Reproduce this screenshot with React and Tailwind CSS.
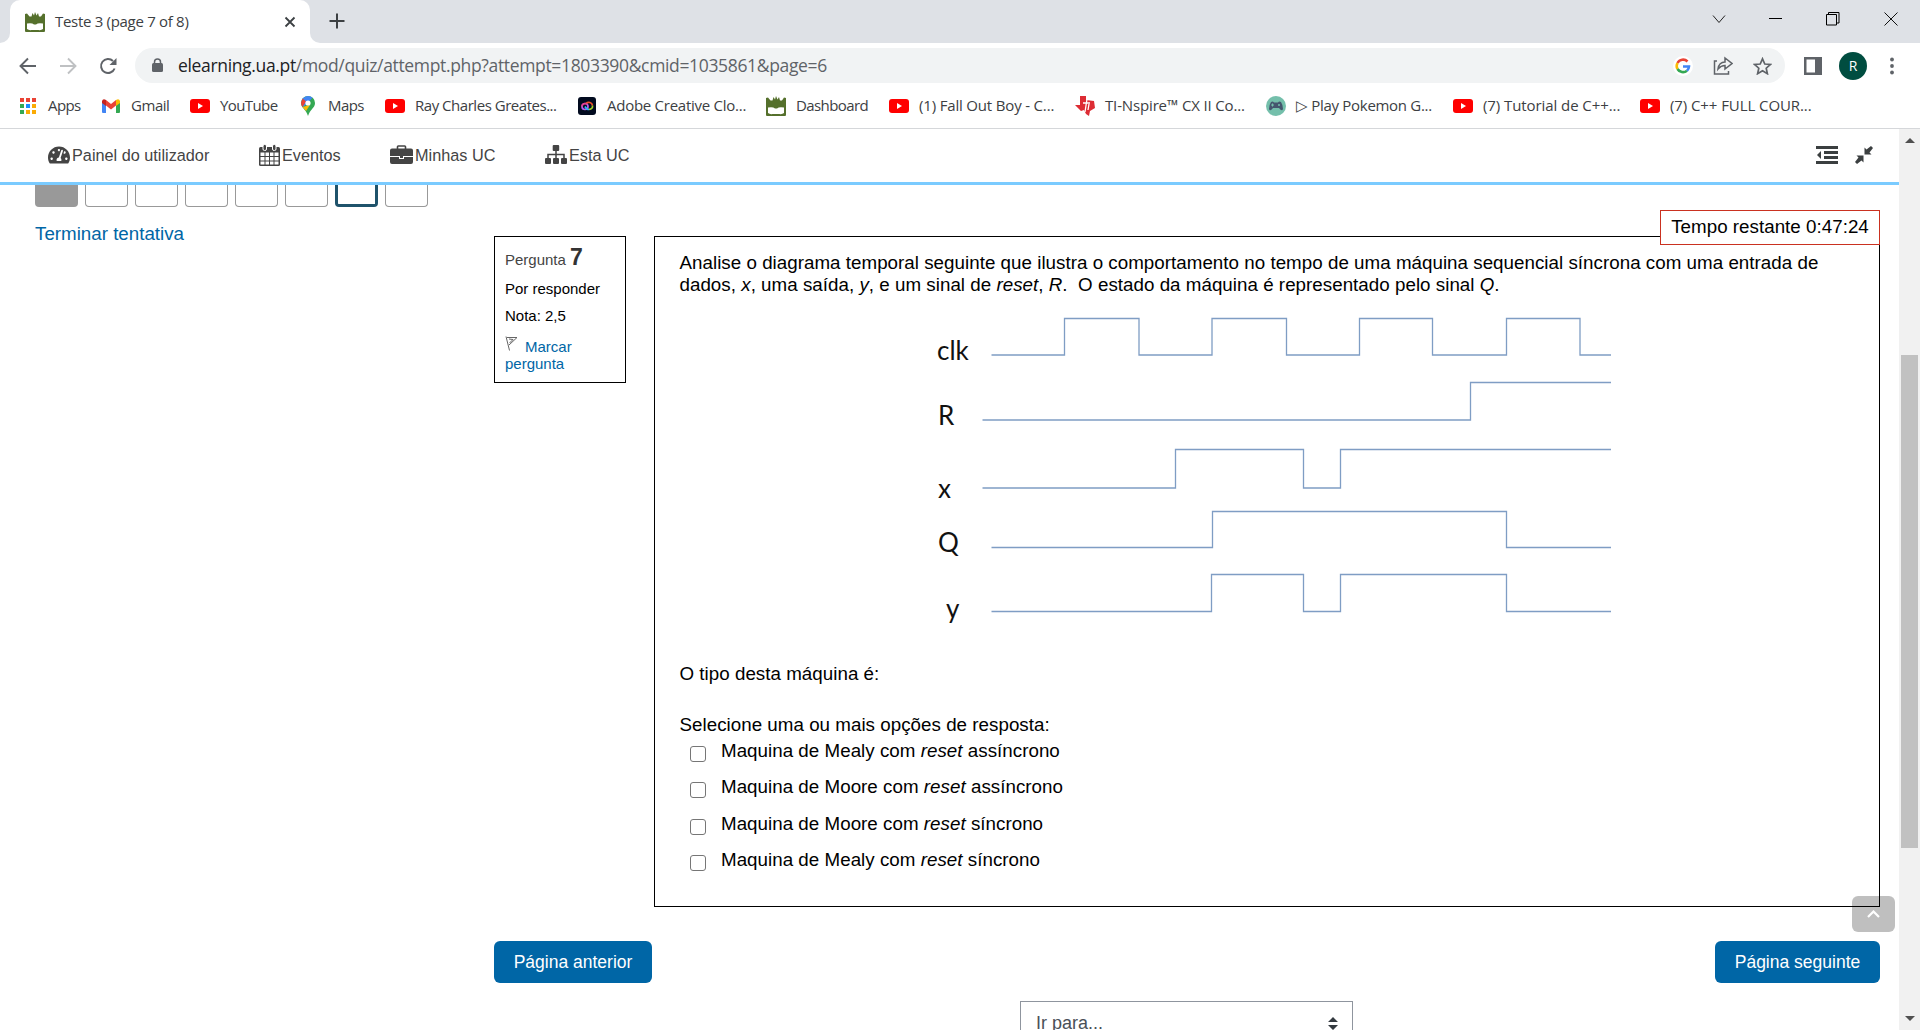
import { FaTachometerAlt } from "react-icons/fa";

const TX = "whitespace-nowrap leading-none";

function YouTube() {
  return (
    <svg width="20" height="14" viewBox="0 0 20 14"><rect width="20" height="14" rx="3" fill="#f00" /><path d="M8 4l5 3-5 3z" fill="#fff" /></svg>
  );
}
function UA() {
  return (
    <svg width="20" height="20" viewBox="0 0 20 20"><path d="M0 2l2-.5 2.500 3 2 0L7.500 1l1.500 2.500L10 0l1.500 3.500L13 1l1 3.500h2L18 1.500l2 .5v17q0 1-1 1H1q-1 0-1-1z" fill="#55702c" /><path d="M2 11.500q5-1 7 1h2q2-2 7-1V17q-2 1.500-4.500 1H6.500Q4 18.500 2 17z" fill="#fff" /></svg>
  );
}
function Apps() {
  const c = ["#ea4335", "#ea4335", "#ea4335", "#34a853", "#1a8cff", "#fbab04", "#34a853", "#fbab04", "#fbab04"];
  return (
    <svg width="18" height="18" viewBox="0 0 18 18">{c.map((f, i) => <rect key={i} x={1 + (i % 3) * 6} y={1 + Math.floor(i / 3) * 6} width="4" height="4" fill={f} />)}</svg>
  );
}
function Gmail() {
  return (
    <svg width="18" height="14" viewBox="0 0 18 14"><path d="M0 2v11q0 1 1 1h3V5z" fill="#4285f4" /><path d="M18 2v11q0 1-1 1h-3V5z" fill="#34a853" /><path d="M4 1l5 4 5-4v5.500L9 10.500 4 6.500z" fill="#ea4335" /><path d="M14 1q3-2 4 1v2l-4 3z" fill="#fbbc04" /><path d="M0 2q1-3 4-1v6L0 4z" fill="#c5221f" /></svg>
  );
}
function Maps() {
  return (
    <svg width="14" height="20" viewBox="0 0 14 20"><path d="M7 0a7 7 0 0 0-7 7c0 5 5 6 7 13 2-7 7-8 7-13a7 7 0 0 0-7-7z" fill="#34a853" /><path d="M2 2.200A7 7 0 0 1 11.500 1.600L7 7 2 11Q-1 6 2 2.200z" fill="#4285f4" /><path d="M0 6.500L1.700 2.500 5 5.500 1.500 11Q0 9 0 6.500z" fill="#ea4335" /><path d="M1.500 11L9 9 5 15Q3 12.500 1.500 11z" fill="#fbbc04" /><circle cx="7" cy="7" r="2.600" fill="#fff" /></svg>
  );
}
function Adobe() {
  return (
    <svg width="18" height="18" viewBox="0 0 18 18"><rect width="18" height="18" rx="3" fill="#020b1f" /><g fill="none" strokeWidth="1.700"><circle cx="7" cy="9.500" r="3" stroke="#b45cf0" /><path d="M8 6.500a3.800 3.800 0 0 1 6.500 2" stroke="#f0502a" /><path d="M14.500 8.500q.5 3.500-3.500 4" stroke="#a5d02a" /><path d="M11 12.500q-2.500 0-4-3" stroke="#26b6f5" /><path d="M4 9.500a3 3 0 0 1 5-2.200" stroke="#e83f8a" /></g></svg>
  );
}
function TI() {
  return (
    <svg width="20" height="20" viewBox="0 0 20 20"><path d="M5 0h6v4l8 1 1 7-5 3-1 5-3-2-2-4-3 1-6-6h5z" fill="#dd2c34" /><path d="M12 3l-2 13M8 7h7M14 8l-1 6" stroke="#fff" strokeWidth="1.300" fill="none" /></svg>
  );
}
function Pad() {
  return (
    <svg width="20" height="20" viewBox="0 0 20 20"><circle cx="10" cy="10" r="10" fill="#74bfab" /><path d="M5 6q2-1 3 .5h4Q13 5 15 6q2 3 2 7-1 3-4-1H7q-3 4-4 1 0-4 2-7z" fill="#45566e" /><path d="M5 9h3M6.500 7.500v3" stroke="#74bfab" /><circle cx="13" cy="9" r="1" fill="#74bfab" /></svg>
  );
}
const marks = [
  ["Apps", Apps, "w-[83px]", "tracking-[-0.6px]"],
  ["Gmail", Gmail, "w-[89px]", "tracking-[-0.45px]"],
  ["YouTube", YouTube, "w-[108px]", "tracking-[-0.6px]"],
  ["Maps", Maps, "w-[87px]", "tracking-[-0.6px]"],
  ["Ray Charles Greates...", YouTube, "w-[192px]", "tracking-[-0.47px]"],
  ["Adobe Creative Clo...", Adobe, "w-[189px]", "tracking-[-0.26px]"],
  ["Dashboard", UA, "w-[123px]", "tracking-[-0.6px]"],
  ["(1) Fall Out Boy - C...", YouTube, "w-[186px]", "tracking-[-0.17px]"],
  ["TI-Nspire™ CX II Co...", TI, "w-[191px]", "tracking-[-0.15px]"],
  ["▷ Play Pokemon G...", Pad, "w-[187px]", "tracking-[-0.3px]"],
  ["(7) Tutorial de C++...", YouTube, "w-[187px]", "tracking-[-0.08px]"],
  ["(7) C++ FULL COUR...", YouTube, "w-[187px]", "tracking-[-0.08px]"],
];

function Browser() {
  return (
    <header className="font-['Open_Sans',sans-serif] text-[15px] text-[#3c4043]">
      <div className="flex h-[43px] bg-[#dee1e6]">
        <div className="w-[10px] self-end bg-white"><div className="h-[10px] rounded-br-[10px] bg-[#dee1e6]" /></div>
        <div className="flex w-[300px] items-center rounded-t-[10px] bg-white pl-[15px] pr-[14px]">
          <UA />
          <span className={`${TX} ml-[10px] flex-1 text-[15px] tracking-[-0.3px]`}>Teste 3 (page 7 of 8)</span>
          <svg width="12" height="12" viewBox="0 0 12 12" stroke="#3c4043" strokeWidth="1.800"><path d="M1.500 1.500l9 9M10.500 1.500l-9 9" /></svg>
        </div>
        <div className="w-[10px] self-end bg-white"><div className="h-[10px] rounded-bl-[10px] bg-[#dee1e6]" /></div>
        <svg className="ml-[9px] mt-[13px]" width="16" height="16" viewBox="0 0 16 16" stroke="#3c4043" strokeWidth="2"><path d="M8 .5v15M.5 8h15" /></svg>
        <div className="ml-auto mr-[22px] flex h-[37px] items-center">
          <svg width="14" height="10" viewBox="0 0 14 10" fill="none" stroke="#222"><path d="M1 1.500l6 7 6-7" /></svg>
          <div className="ml-[43px] h-px w-[13px] bg-black" />
          <svg className="ml-[44px]" width="14" height="14" viewBox="0 0 14 14" fill="none" stroke="#000"><path d="M.5 2.500h10v10.500H.5zM2.500 2.500V.5h10.500v10.500h-2.500" /></svg>
          <svg className="ml-[44px]" width="14" height="14" viewBox="0 0 14 14" fill="none" stroke="#111"><path d="M.5 .5l13 13M13.500 .5l-13 13" /></svg>
        </div>
      </div>
      <div className="flex h-[45px] items-center pl-[19px] pr-[26px]">
        <svg width="18" height="18" viewBox="0 0 18 18" fill="none" stroke="#5f6368" strokeWidth="1.900"><path d="M17 9H2M9 1.500L1.500 9 9 16.500" /></svg>
        <svg className="ml-[22px]" width="18" height="18" viewBox="0 0 18 18" fill="none" stroke="#bfc1c3" strokeWidth="1.900"><path d="M1 9h15M9 1.500L16.500 9 9 16.500" /></svg>
        <svg className="ml-[22px]" width="18" height="18" viewBox="0 0 18 18"><path d="M15.600 11.500A7 7 0 1 1 14 4" fill="none" stroke="#5f6368" strokeWidth="2" /><path d="M17.500 1v7h-7z" fill="#5f6368" /></svg>
        <div className="ml-[18px] flex h-[35px] flex-1 items-center rounded-full bg-[#f1f3f4] pl-[17px] pr-[13px]">
          <svg width="11" height="15" viewBox="0 0 11 15"><rect y="5" width="11" height="9" rx="1.500" fill="#5f6368" /><path d="M2.500 6V4a3 3 0 0 1 6 0v2" fill="none" stroke="#5f6368" strokeWidth="1.500" /></svg>
          <span className={`${TX} ml-[15px] flex-1 text-[17.5px] tracking-[-0.34px] text-[#5f6368]`}><span className="text-[#202124]">elearning.ua.pt</span>/mod/quiz/attempt.php?attempt=1803390&amp;cmid=1035861&amp;page=6</span>
          <svg width="20" height="20" viewBox="0 0 20 20"><circle cx="10" cy="10" r="10" fill="#fff" /><g fill="none" strokeWidth="2.600"><path d="M4.500 7A6.300 6.300 0 0 1 14.500 5.500" stroke="#ea4335" /><path d="M4.500 13a6.300 6.300 0 0 1 0-6" stroke="#fbbc05" /><path d="M4.500 13a6.300 6.300 0 0 0 9.500 1.700" stroke="#34a853" /><path d="M14 14.700a6 6 0 0 0 2-4.200h-6" stroke="#4285f4" /></g></svg>
          <svg className="ml-[20px]" width="20" height="20" viewBox="0 0 20 20" fill="none" stroke="#5f6368" strokeWidth="1.500"><path d="M4 5H1.500v13h14v-3M5 13q1-7 7-7V2l7 5.500L12 13V9.500q-4 0-7 3.500z" /></svg>
          <svg className="ml-[20px]" width="19" height="18" viewBox="0 0 19 18" fill="none" stroke="#5f6368" strokeWidth="1.700"><path d="M9.500 1.800l2.300 5.200 5.600.5-4.200 3.700 1.200 5.500-4.900-2.900-4.900 2.900 1.200-5.500L1.600 7.500l5.600-.5z" /></svg>
        </div>
        <svg className="ml-[19px]" width="18" height="18" viewBox="0 0 18 18"><path d="M0 0h18v18H0zM2.500 2.500v13H11v-13z" fill="#5f6368" fillRule="evenodd" /></svg>
        <div className="ml-[17px] flex size-[28px] items-center justify-center rounded-full bg-[#004d40] text-[14px] text-white">R</div>
        <svg className="ml-[23px]" width="4" height="18" viewBox="0 0 4 18" fill="#5f6368"><circle cx="2" cy="2.500" r="1.900" /><circle cx="2" cy="9" r="1.900" /><circle cx="2" cy="15.500" r="1.900" /></svg>
      </div>
      <div className="flex h-[41px] items-center border-b border-[#d5d7da] pb-[5px] pl-[18px]">
        {marks.map(([t, I, w, tr]) => (
          <div key={t} className={`flex shrink-0 items-center gap-[10px] ${w}`}>
            <div className="flex w-[20px] justify-center"><I /></div>
            <span className={`${TX} ${tr}`}>{t}</span>
          </div>
        ))}
      </div>
    </header>
  );
}

const Calendar = () => (
  <svg width="21" height="22" viewBox="0 0 21 22"><rect y="3" width="21" height="19" rx="1.500" fill="#444" /><path d="M1.500 8.500h4v3.500h-4zM6.500 8.500h3.500v3.500H6.500zM11 8.500h3.500v3.500H11zM15.500 8.500h4v3.500h-4zM1.500 13h4v3.500h-4zM6.500 13h3.500v3.500H6.500zM11 13h3.500v3.500H11zM15.500 13h4v3.500h-4zM1.500 17.500h4v3h-4zM6.500 17.500h3.500v3H6.500zM11 17.500h3.500v3H11zM15.500 17.500h4v3h-4z" fill="#fff" /><rect x="4" y=".5" width="3.500" height="6" rx="1.500" fill="#444" stroke="#fff" /><rect x="13.500" y=".5" width="3.500" height="6" rx="1.500" fill="#444" stroke="#fff" /></svg>
);
const Case = () => (
  <svg width="23" height="20" viewBox="0 0 23 20"><path d="M7.500 4V1.800Q7.500 1 8.300 1h6.400q.8 0 .8.800V4" fill="none" stroke="#444" strokeWidth="1.600" /><path d="M2 3.500h19q2 0 2 2V11H0V5.500q0-2 2-2zM0 12h9v2h5v-2h9v5q0 2-2 2H2q-2 0-2-2z" fill="#444" /><rect x="10" y="11" width="3" height="2" fill="#444" /><path d="M9.500 11v2.500h4V11" fill="none" stroke="#fff" strokeWidth="1" /></svg>
);
const Sitemap = () => (
  <svg width="22" height="20" viewBox="0 0 22 20" fill="#444"><rect x="7.700" y="0" width="6.500" height="6" rx="1" /><rect x="0" y="13" width="6" height="6" rx="1" /><rect x="8" y="13" width="6" height="6" rx="1" /><rect x="16" y="13" width="6" height="6" rx="1" /><path d="M3 14V9.500h16V14M11 5v9" fill="none" stroke="#444" strokeWidth="1.500" /></svg>
);

function Nav() {
  return (
    <nav className="flex h-[56px] items-center border-b-[3px] border-[#7acbff] bg-white pb-px pl-[48px] pr-[26px] text-[#444]">
      <div className="flex w-[211px] items-center gap-[2px]"><FaTachometerAlt size={22} /><span className={`${TX} text-[16.25px]`}>Painel do utilizador</span></div>
      <div className="flex w-[131px] items-center gap-[2px]"><Calendar /><span className={`${TX} text-[16.25px]`}>Eventos</span></div>
      <div className="flex w-[155px] items-center gap-[2px]"><Case /><span className={`${TX} text-[16.25px]`}>Minhas UC</span></div>
      <div className="flex items-center gap-[2px]"><Sitemap /><span className={`${TX} text-[16.25px]`}>Esta UC</span></div>
      <svg className="ml-auto" width="22" height="18" viewBox="0 0 22 18" fill="#3b3f40"><path d="M0 0h22v3H0zM8 5h14v3H8zM8 10h14v3H8zM0 15h22v3H0zM5 5v8L1 9z" /></svg>
      <svg className="ml-[17px]" width="18" height="18" viewBox="0 0 18 18" fill="#3b3f40"><path d="M9.500 1.500l2 2L16 0l2 2-3.500 4.500 2 2h-7zM1.500 9.500h7v7l-2-2L2 18l-2-2 3.500-4.500z" /></svg>
    </nav>
  );
}

function Diagram() {
  return (
    <svg className="ml-[250px] mt-[15px] block" width="690" height="320" viewBox="930 310 690 320">
      <g fill="none" stroke="#7f9dc4" strokeWidth="1.300">
        <path d="M991.500 355H1064.500V318.500H1139V355H1212V318.500H1286.500V355H1359.500V318.500H1432.500V355H1506.500V318.500H1580V355H1611" />
        <path d="M982.500 420H1470.500V382.500H1611" />
        <path d="M982.500 488H1175.500V449.500H1303.500V488H1340.500V449.500H1611" />
        <path d="M991.500 547.500H1212.500V511.500H1506.500V547.500H1611" />
        <path d="M991.500 611.500H1211.500V574.500H1303.500V611.500H1340.500V574.500H1506.500V611.500H1611" />
      </g>
      <g className="font-['Lato',sans-serif]" fontSize="26" fill="#111">
        <text x="937" y="360">clk</text><text x="938" y="425">R</text><text x="938" y="497.500">x</text><text x="938" y="552">Q</text><text x="946" y="618">y</text>
      </g>
    </svg>
  );
}

const options = [["Mealy", "assíncrono"], ["Moore", "assíncrono"], ["Moore", "síncrono"], ["Mealy", "síncrono"]];
const boxes = [0, 1, 2, 3, 4, 5, 6, 7];

function Quiz() {
  return (
    <main className="flex h-[845px] overflow-hidden text-[18.75px] leading-[22px] text-black">
      <aside className="w-[459px] pl-[35px]">
        <div className="flex gap-[7px]">
          {boxes.map((i) => (
            <div key={i} className={i === 0 ? "h-[22px] w-[43px] rounded-b-[4px] bg-[#999]" : i === 6 ? "h-[22px] w-[43px] rounded-b-[4px] border-[3px] border-t-0 border-[#1f536b]" : "h-[22px] w-[43px] rounded-b-[4px] border border-t-0 border-[#999]"} />
          ))}
        </div>
        <div className="mt-[16px] text-[#0066a6]">Terminar tentativa</div>
      </aside>
      <div className="ml-[35px] mt-[51px] w-[1386px]">
        <div className="flex justify-between">
          <div className="h-[147px] w-[132px] border border-black pl-[10px] text-[15px] leading-[18px]">
            <div className="mt-[8px] flex items-baseline gap-[4px] text-[#444]">Pergunta <b className="text-[23px] leading-[25px] text-[#333]">7</b></div>
            <div className="mt-[10px]">Por responder</div>
            <div className="mt-[9px]">Nota: 2,5</div>
            <div className="mt-[11px] leading-[17px] text-[#0066a6]"><svg className="mr-[7px] inline-block align-[1px]" width="13" height="15" viewBox="0 0 13 15" fill="none" stroke="#666"><path d="M1 .5l3.500 14M2 1.500h10L4 9M4 3l4 .500L4.500 7" /></svg>Marcar<br />pergunta</div>
          </div>
          <section className="relative h-[671px] w-[1226px] border border-black pl-[24.500px] pt-[15px] tracking-[0.03px]">
            <div className="absolute -right-px top-[-27px] flex h-[35px] w-[220px] items-center justify-center border border-[#ca3120] bg-white pb-px whitespace-nowrap">Tempo restante 0:47:24</div>
            <p className="w-[1150px]">Analise o diagrama temporal seguinte que ilustra o comportamento no tempo de uma máquina sequencial síncrona com uma entrada de dados, <i>x</i>, uma saída, <i>y</i>, e um sinal de <i>reset</i>, <i>R</i>.&nbsp; O estado da máquina é representado pelo sinal <i>Q</i>.</p>
            <div className="-mt-px"><Diagram /></div>
            <p className="mt-[33px]">O tipo desta máquina é:</p>
            <p className="mt-[29px]">Selecione uma ou mais opções de resposta:</p>
            <div className="mt-[4px]">
              {options.map(([a, b], i) => (
                <label key={i} className="flex h-[36.300px] items-start pl-[10px]"><span className="mt-[6px] size-[16px] rounded-[3px] border border-[#767676]" /><span className="ml-[15.500px]">Maquina de {a} com <i>reset</i> {b}</span></label>
              ))}
            </div>
          </section>
        </div>
        <div className="mt-[34px] flex justify-between text-[17.500px] text-white">
          <button className="h-[42px] w-[158px] rounded-[6px] bg-[#0066a6] whitespace-nowrap">Página anterior</button>
          <button className="h-[42px] w-[165px] rounded-[6px] bg-[#0066a6] whitespace-nowrap">Página seguinte</button>
        </div>
        <div className="ml-[526px] mt-[18px] flex h-[44px] w-[333px] items-center justify-between border border-[#8f959e] pl-[15px] pr-[14px] text-[18px] text-[#495057]"><span>Ir para...</span><svg width="10" height="13" viewBox="0 0 10 13" fill="#343a40"><path d="M0 5l5-5 5 5zM0 8h10l-5 5z" /></svg></div>
      </div>
    </main>
  );
}

export default function App() {
  return (
    <div className="relative flex h-[1030px] w-[1920px] flex-col overflow-hidden bg-white font-['Liberation_Sans',Arial,sans-serif]">
      <Browser />
      <div className="flex">
        <div className="w-[1899px]">
          <Nav />
          <Quiz />
        </div>
        <div className="flex h-[901px] w-[21px] flex-col items-center bg-[#f1f1f1] pb-[9px] pt-[9px]">
          <svg width="10" height="5" viewBox="0 0 10 5" fill="#505050"><path d="M5 0l5 5H0z" /></svg>
          <div className="mb-auto mt-[212px] h-[493px] w-[17px] bg-[#c1c1c1]" />
          <svg width="10" height="5" viewBox="0 0 10 5" fill="#505050"><path d="M0 0h10L5 5z" /></svg>
        </div>
      </div>
      <div className="absolute left-[1852px] top-[896px] flex h-[36px] w-[43px] items-center justify-center rounded-[6px] bg-black/25">
        <svg width="13" height="8" viewBox="0 0 13 8" fill="none" stroke="#fff" strokeWidth="2.200"><path d="M1 7l5.500-5.500L12 7" /></svg>
      </div>
    </div>
  );
}
